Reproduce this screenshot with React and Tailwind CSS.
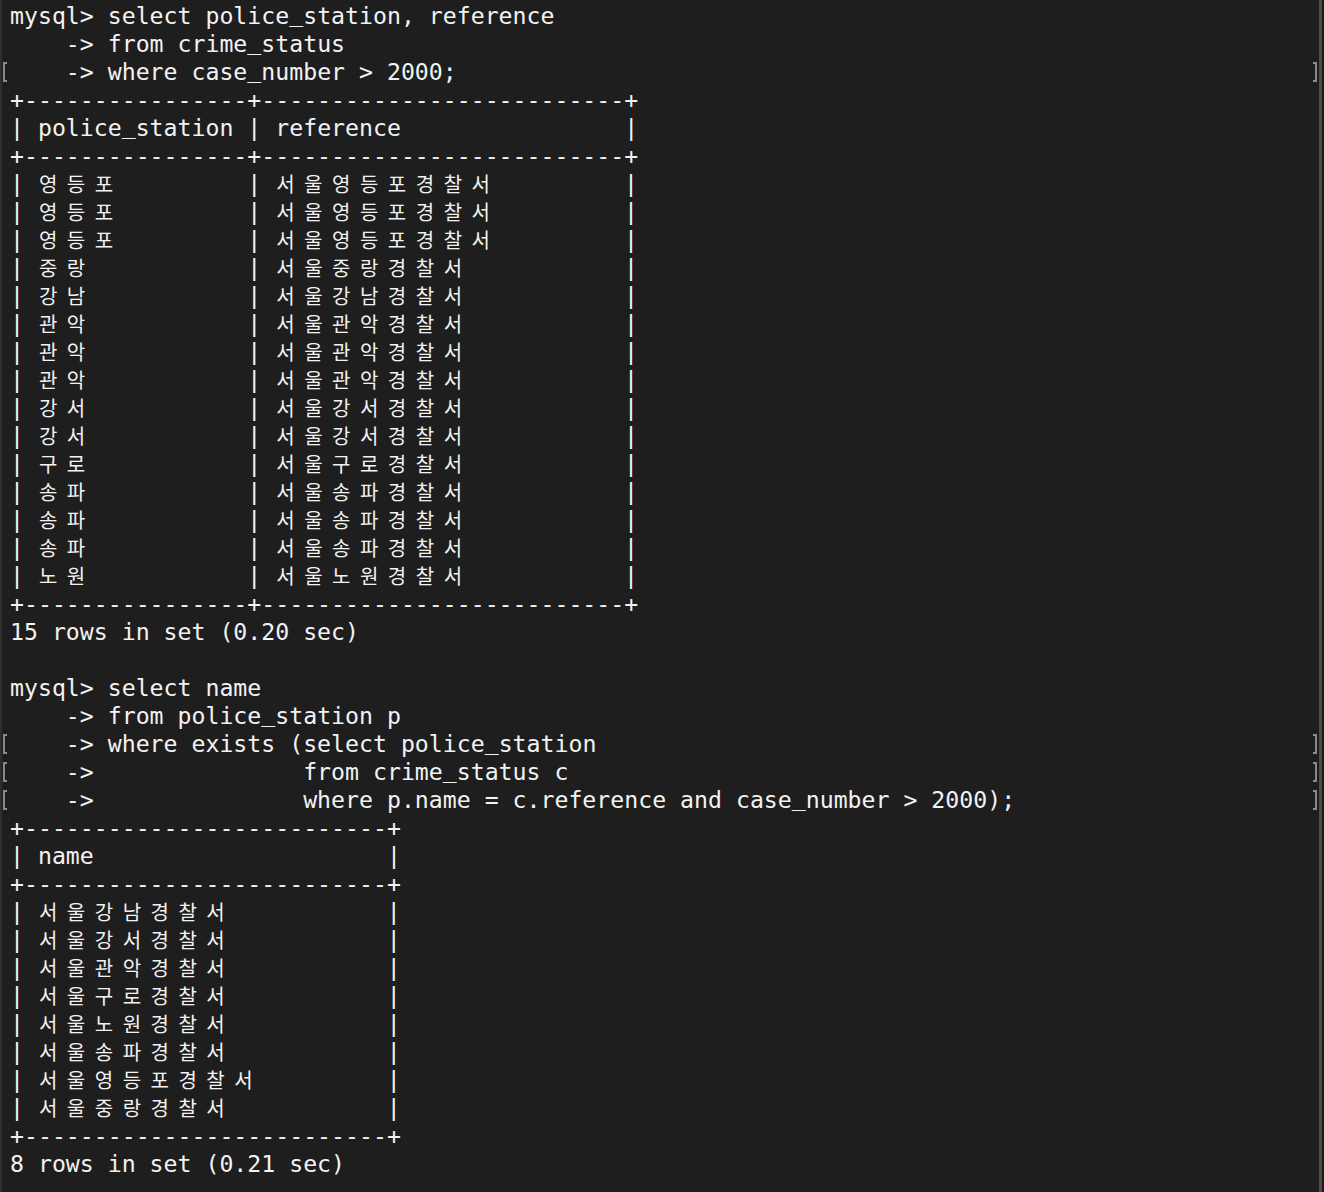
import React from 'react';

const HANGUL = /([\uAC00-\uD7A3])/;
const SPLIT = /([\uAC00-\uD7A3_])/;

// terminal columns: hangul takes two cells
const cellWidth = (s) => [...s].reduce((n, ch) => n + (HANGUL.test(ch) ? 2 : 1), 0);
const pad = (s, n) => s + ' '.repeat(Math.max(0, n - cellWidth(s)));
const border = (widths) => '+' + widths.map((w) => '-'.repeat(w + 2)).join('+') + '+';
const row = (cells, widths) => '| ' + cells.map((c, i) => pad(c, widths[i])).join(' | ') + ' |';

const crimeRows = [
  ['영등포', '서울영등포경찰서'],
  ['영등포', '서울영등포경찰서'],
  ['영등포', '서울영등포경찰서'],
  ['중랑', '서울중랑경찰서'],
  ['강남', '서울강남경찰서'],
  ['관악', '서울관악경찰서'],
  ['관악', '서울관악경찰서'],
  ['관악', '서울관악경찰서'],
  ['강서', '서울강서경찰서'],
  ['강서', '서울강서경찰서'],
  ['구로', '서울구로경찰서'],
  ['송파', '서울송파경찰서'],
  ['송파', '서울송파경찰서'],
  ['송파', '서울송파경찰서'],
  ['노원', '서울노원경찰서'],
];

const names = [
  '서울강남경찰서',
  '서울강서경찰서',
  '서울관악경찰서',
  '서울구로경찰서',
  '서울노원경찰서',
  '서울송파경찰서',
  '서울영등포경찰서',
  '서울중랑경찰서',
];

const w1 = [14, 24];
const w2 = [24];

const lines = [
  { text: 'mysql> select police_station, reference' },
  { text: '    -> from crime_status' },
  { text: '    -> where case_number > 2000;', mark: true },
  { text: border(w1) },
  { text: row(['police_station', 'reference'], w1) },
  { text: border(w1) },
  ...crimeRows.map((r) => ({ text: row(r, w1) })),
  { text: border(w1) },
  { text: '15 rows in set (0.20 sec)' },
  { text: '' },
  { text: 'mysql> select name' },
  { text: '    -> from police_station p' },
  { text: '    -> where exists (select police_station', mark: true },
  { text: pad('    ->', 21) + 'from crime_status c', mark: true },
  { text: pad('    ->', 21) + 'where p.name = c.reference and case_number > 2000);', mark: true },
  { text: border(w2) },
  { text: row(['name'], w2) },
  { text: border(w2) },
  ...names.map((n) => ({ text: row([n], w2) })),
  { text: border(w2) },
  { text: '8 rows in set (0.21 sec)' },
];

const TermText = ({ text }) => {
  const parts = text.split(SPLIT);
  return (
    <>
      {parts.map((p, i) => {
        if (HANGUL.test(p)) {
          return (
            <span key={i} className="inline-block w-[2ch] pl-[1px]">
              <span className="text-[20px]">{p}</span>
            </span>
          );
        }
        if (p === '_') {
          return (
            <span key={i} className="relative -top-[3px]">
              _
            </span>
          );
        }
        return <span key={i}>{p}</span>;
      })}
    </>
  );
};

const App = () => {
  return (
    <div className="flex h-[1192px] w-[1324px] overflow-hidden bg-[#1e1e1e] text-[#f2f2f2] font-['DejaVu_Sans_Mono','Noto_Sans_CJK_KR',monospace] text-[23.2px]">
      <div className="w-[2px] bg-[#2d2d2d]" />
      <div className="flex flex-1 flex-col pt-[2px]">
        {lines.map((line, i) => (
          <div key={i} className="flex h-[28px] leading-[28px]">
            <div className="flex w-[8px] items-center">
              {line.mark && (
                <div className="ml-[1px] h-[20px] w-[4px] border-y-2 border-l-2 border-[#8a8a8a]" />
              )}
            </div>
            <div className="flex-1 whitespace-pre">
              <TermText text={line.text} />
            </div>
            <div className="flex w-[6px] items-center">
              {line.mark && (
                <div className="h-[20px] w-[4px] border-y-2 border-r-2 border-[#8a8a8a]" />
              )}
            </div>
          </div>
        ))}
      </div>
      <div className="w-[3px] bg-[#4b4b4b]" />
      <div className="w-[2px] bg-[#1a1a1a]" />
    </div>
  );
};

export default App;
